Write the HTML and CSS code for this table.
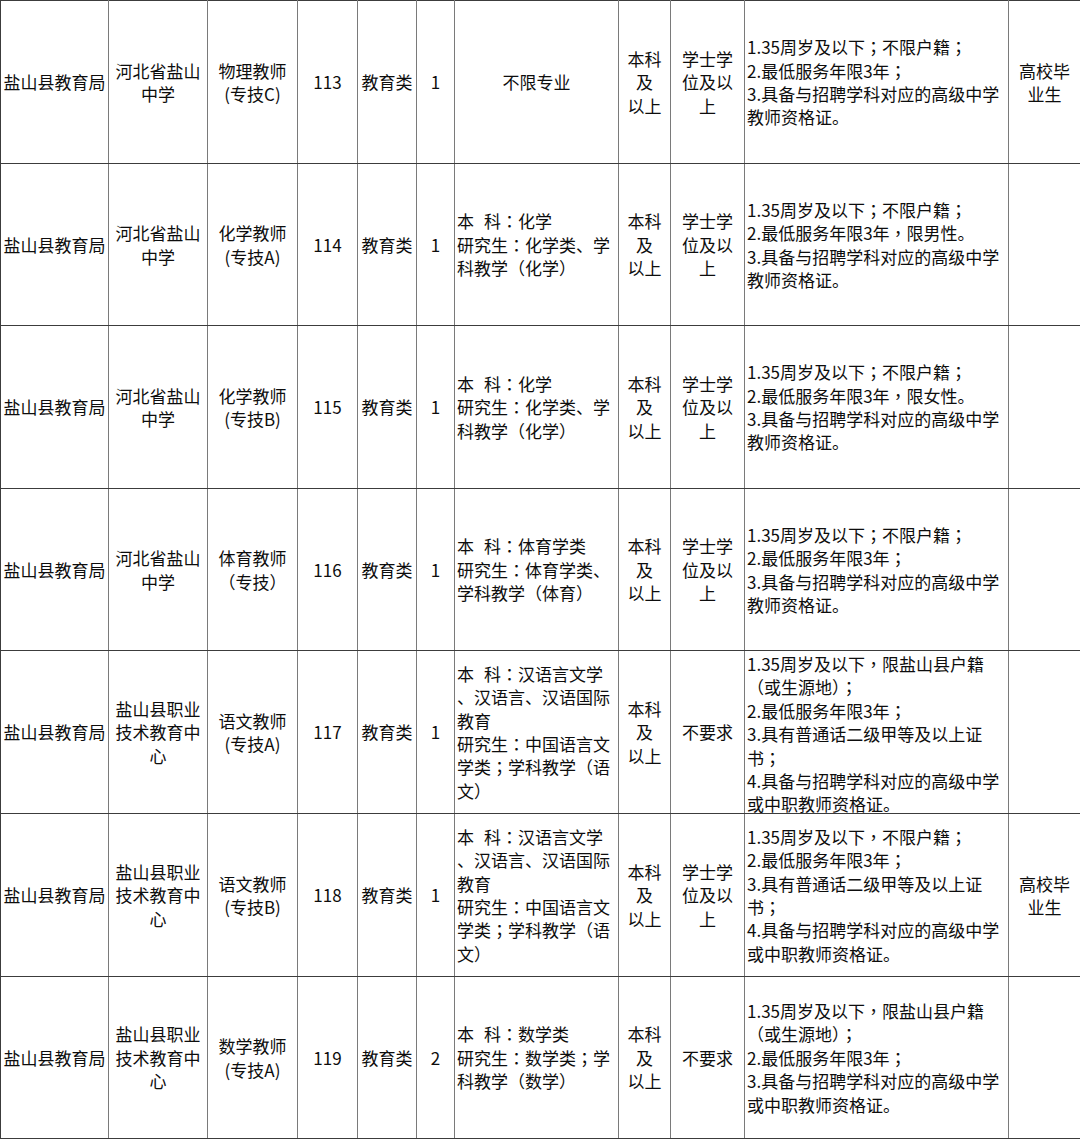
FILE: index.html
```html
<!DOCTYPE html>
<html lang="zh-CN">
<head>
<meta charset="utf-8">
<title>招聘岗位表</title>
<link rel="stylesheet" href="styles.css">
</head>
<body>
<table class="grid">
  <colgroup>
    <col class="w1"><col class="w2"><col class="w3"><col class="w4"><col class="w5"><col class="w6">
    <col class="w7"><col class="w8"><col class="w9"><col class="w10"><col class="w11">
  </colgroup>
  <tbody>
    <tr class="r162">
      <td><div class="c"><div class="t">盐山县教育局</div></div></td>
      <td><div class="c"><div class="t">河北省盐山<br>中学</div></div></td>
      <td><div class="c"><div class="t">物理教师<br>(专技C)</div></div></td>
      <td><div class="c"><div class="t">113</div></div></td>
      <td><div class="c"><div class="t">教育类</div></div></td>
      <td><div class="c"><div class="t">1</div></div></td>
      <td><div class="c"><div class="t">不限专业</div></div></td>
      <td><div class="c"><div class="t">本科<br>及<br>以上</div></div></td>
      <td><div class="c"><div class="t">学士学<br>位及以<br>上</div></div></td>
      <td><div class="c l"><div class="t">1.35周岁及以下<span class="p" lang="zh-TW">；</span>不限户籍<span class="p" lang="zh-TW">；</span><br>2.最低服务年限3年<span class="p" lang="zh-TW">；</span><br>3.具备与招聘学科对应的高级中学<br>教师资格证。</div></div></td>
      <td><div class="c"><div class="t">高校毕<br>业生</div></div></td>
    </tr>
    <tr class="r161">
      <td><div class="c"><div class="t">盐山县教育局</div></div></td>
      <td><div class="c"><div class="t">河北省盐山<br>中学</div></div></td>
      <td><div class="c"><div class="t">化学教师<br>(专技A)</div></div></td>
      <td><div class="c"><div class="t">114</div></div></td>
      <td><div class="c"><div class="t">教育类</div></div></td>
      <td><div class="c"><div class="t">1</div></div></td>
      <td><div class="c l"><div class="t">本<span class="sp"></span>科<span class="p" lang="zh-TW">：</span>化学<br>研究生<span class="p" lang="zh-TW">：</span>化学类、学<br>科教学（化学）</div></div></td>
      <td><div class="c"><div class="t">本科<br>及<br>以上</div></div></td>
      <td><div class="c"><div class="t">学士学<br>位及以<br>上</div></div></td>
      <td><div class="c l"><div class="t">1.35周岁及以下<span class="p" lang="zh-TW">；</span>不限户籍<span class="p" lang="zh-TW">；</span><br>2.最低服务年限3年<span class="p" lang="zh-TW">，</span>限男性。<br>3.具备与招聘学科对应的高级中学<br>教师资格证。</div></div></td>
      <td><div class="c"><div class="t"></div></div></td>
    </tr>
    <tr class="r162">
      <td><div class="c"><div class="t">盐山县教育局</div></div></td>
      <td><div class="c"><div class="t">河北省盐山<br>中学</div></div></td>
      <td><div class="c"><div class="t">化学教师<br>(专技B)</div></div></td>
      <td><div class="c"><div class="t">115</div></div></td>
      <td><div class="c"><div class="t">教育类</div></div></td>
      <td><div class="c"><div class="t">1</div></div></td>
      <td><div class="c l"><div class="t">本<span class="sp"></span>科<span class="p" lang="zh-TW">：</span>化学<br>研究生<span class="p" lang="zh-TW">：</span>化学类、学<br>科教学（化学）</div></div></td>
      <td><div class="c"><div class="t">本科<br>及<br>以上</div></div></td>
      <td><div class="c"><div class="t">学士学<br>位及以<br>上</div></div></td>
      <td><div class="c l"><div class="t">1.35周岁及以下<span class="p" lang="zh-TW">；</span>不限户籍<span class="p" lang="zh-TW">；</span><br>2.最低服务年限3年<span class="p" lang="zh-TW">，</span>限女性。<br>3.具备与招聘学科对应的高级中学<br>教师资格证。</div></div></td>
      <td><div class="c"><div class="t"></div></div></td>
    </tr>
    <tr class="r161">
      <td><div class="c"><div class="t">盐山县教育局</div></div></td>
      <td><div class="c"><div class="t">河北省盐山<br>中学</div></div></td>
      <td><div class="c"><div class="t">体育教师<br>（专技）</div></div></td>
      <td><div class="c"><div class="t">116</div></div></td>
      <td><div class="c"><div class="t">教育类</div></div></td>
      <td><div class="c"><div class="t">1</div></div></td>
      <td><div class="c l"><div class="t">本<span class="sp"></span>科<span class="p" lang="zh-TW">：</span>体育学类<br>研究生<span class="p" lang="zh-TW">：</span>体育学类、<br>学科教学（体育）</div></div></td>
      <td><div class="c"><div class="t">本科<br>及<br>以上</div></div></td>
      <td><div class="c"><div class="t">学士学<br>位及以<br>上</div></div></td>
      <td><div class="c l"><div class="t">1.35周岁及以下<span class="p" lang="zh-TW">；</span>不限户籍<span class="p" lang="zh-TW">；</span><br>2.最低服务年限3年<span class="p" lang="zh-TW">；</span><br>3.具备与招聘学科对应的高级中学<br>教师资格证。</div></div></td>
      <td><div class="c"><div class="t"></div></div></td>
    </tr>
    <tr class="r162">
      <td><div class="c"><div class="t">盐山县教育局</div></div></td>
      <td><div class="c"><div class="t">盐山县职业<br>技术教育中<br>心</div></div></td>
      <td><div class="c"><div class="t">语文教师<br>(专技A)</div></div></td>
      <td><div class="c"><div class="t">117</div></div></td>
      <td><div class="c"><div class="t">教育类</div></div></td>
      <td><div class="c"><div class="t">1</div></div></td>
      <td><div class="c l"><div class="t">本<span class="sp"></span>科<span class="p" lang="zh-TW">：</span>汉语言文学<br>、汉语言、汉语国际<br>教育<br>研究生<span class="p" lang="zh-TW">：</span>中国语言文<br>学类<span class="p" lang="zh-TW">；</span>学科教学（语<br>文）</div></div></td>
      <td><div class="c"><div class="t">本科<br>及<br>以上</div></div></td>
      <td><div class="c"><div class="t">不要求</div></div></td>
      <td><div class="c l ov"><div class="t">1.35周岁及以下<span class="p" lang="zh-TW">，</span>限盐山县户籍<br>（或生源地）<span class="p" lang="zh-TW">；</span><br>2.最低服务年限3年<span class="p" lang="zh-TW">；</span><br>3.具有普通话二级甲等及以上证<br>书<span class="p" lang="zh-TW">；</span><br>4.具备与招聘学科对应的高级中学<br>或中职教师资格证。</div></div></td>
      <td><div class="c"><div class="t"></div></div></td>
    </tr>
    <tr class="r162">
      <td><div class="c"><div class="t">盐山县教育局</div></div></td>
      <td><div class="c"><div class="t">盐山县职业<br>技术教育中<br>心</div></div></td>
      <td><div class="c"><div class="t">语文教师<br>(专技B)</div></div></td>
      <td><div class="c"><div class="t">118</div></div></td>
      <td><div class="c"><div class="t">教育类</div></div></td>
      <td><div class="c"><div class="t">1</div></div></td>
      <td><div class="c l"><div class="t">本<span class="sp"></span>科<span class="p" lang="zh-TW">：</span>汉语言文学<br>、汉语言、汉语国际<br>教育<br>研究生<span class="p" lang="zh-TW">：</span>中国语言文<br>学类<span class="p" lang="zh-TW">；</span>学科教学（语<br>文）</div></div></td>
      <td><div class="c"><div class="t">本科<br>及<br>以上</div></div></td>
      <td><div class="c"><div class="t">学士学<br>位及以<br>上</div></div></td>
      <td><div class="c l"><div class="t">1.35周岁及以下<span class="p" lang="zh-TW">，</span>不限户籍<span class="p" lang="zh-TW">；</span><br>2.最低服务年限3年<span class="p" lang="zh-TW">；</span><br>3.具有普通话二级甲等及以上证<br>书<span class="p" lang="zh-TW">；</span><br>4.具备与招聘学科对应的高级中学<br>或中职教师资格证。</div></div></td>
      <td><div class="c"><div class="t">高校毕<br>业生</div></div></td>
    </tr>
    <tr class="r161">
      <td><div class="c"><div class="t">盐山县教育局</div></div></td>
      <td><div class="c"><div class="t">盐山县职业<br>技术教育中<br>心</div></div></td>
      <td><div class="c"><div class="t">数学教师<br>(专技A)</div></div></td>
      <td><div class="c"><div class="t">119</div></div></td>
      <td><div class="c"><div class="t">教育类</div></div></td>
      <td><div class="c"><div class="t">2</div></div></td>
      <td><div class="c l"><div class="t">本<span class="sp"></span>科<span class="p" lang="zh-TW">：</span>数学类<br>研究生<span class="p" lang="zh-TW">：</span>数学类<span class="p" lang="zh-TW">；</span>学<br>科教学（数学）</div></div></td>
      <td><div class="c"><div class="t">本科<br>及<br>以上</div></div></td>
      <td><div class="c"><div class="t">不要求</div></div></td>
      <td><div class="c l"><div class="t">1.35周岁及以下<span class="p" lang="zh-TW">，</span>限盐山县户籍<br>（或生源地）<span class="p" lang="zh-TW">；</span><br>2.最低服务年限3年<span class="p" lang="zh-TW">；</span><br>3.具备与招聘学科对应的高级中学<br>或中职教师资格证。</div></div></td>
      <td><div class="c"><div class="t"></div></div></td>
    </tr>
  </tbody>
</table>
</body>
</html>
```

FILE: styles.css
```css
html, body {
  margin: 0;
  padding: 0;
  background: #ffffff;
}

body {
  font-family: "Noto Sans CJK SC", "Noto Sans", sans-serif;
  font-size: 17px;
  line-height: 23.4px;
  color: #0d0d0d;
}

.grid {
  border-collapse: collapse;
  table-layout: fixed;
  width: 1080px;
}

.w1 { width: 108px; }
.w2 { width: 99px; }
.w3 { width: 90px; }
.w4 { width: 60px; }
.w5 { width: 59px; }
.w6 { width: 38px; }
.w7 { width: 164px; }
.w8 { width: 52px; }
.w9 { width: 74px; }
.w10 { width: 264px; }
.w11 { width: 72px; }

.grid td {
  padding: 0;
  vertical-align: middle;
  border-top: 1px solid #3c3c3c;
  border-bottom: 1px solid #3c3c3c;
  border-left: 1px solid #7a7a7a;
  border-right: 1px solid #7a7a7a;
}

.grid td:first-child {
  border-left-color: #3c3c3c;
}

.c {
  box-sizing: border-box;
  display: flex;
  flex-direction: column;
  justify-content: center;
  overflow: hidden;
  text-align: center;
  white-space: nowrap;
}

.r162 .c { height: 162px; }
.r161 .c { height: 161px; }

.c.l {
  text-align: left;
  padding-left: 2px;
}

.c.ov {
  justify-content: flex-start;
  padding-top: 1px;
}

.t {
  flex: none;
}

.p {
  font-family: "Noto Sans CJK TC", "Noto Sans CJK SC", sans-serif;
}

.sp {
  display: inline-block;
  width: 10px;
}
```
